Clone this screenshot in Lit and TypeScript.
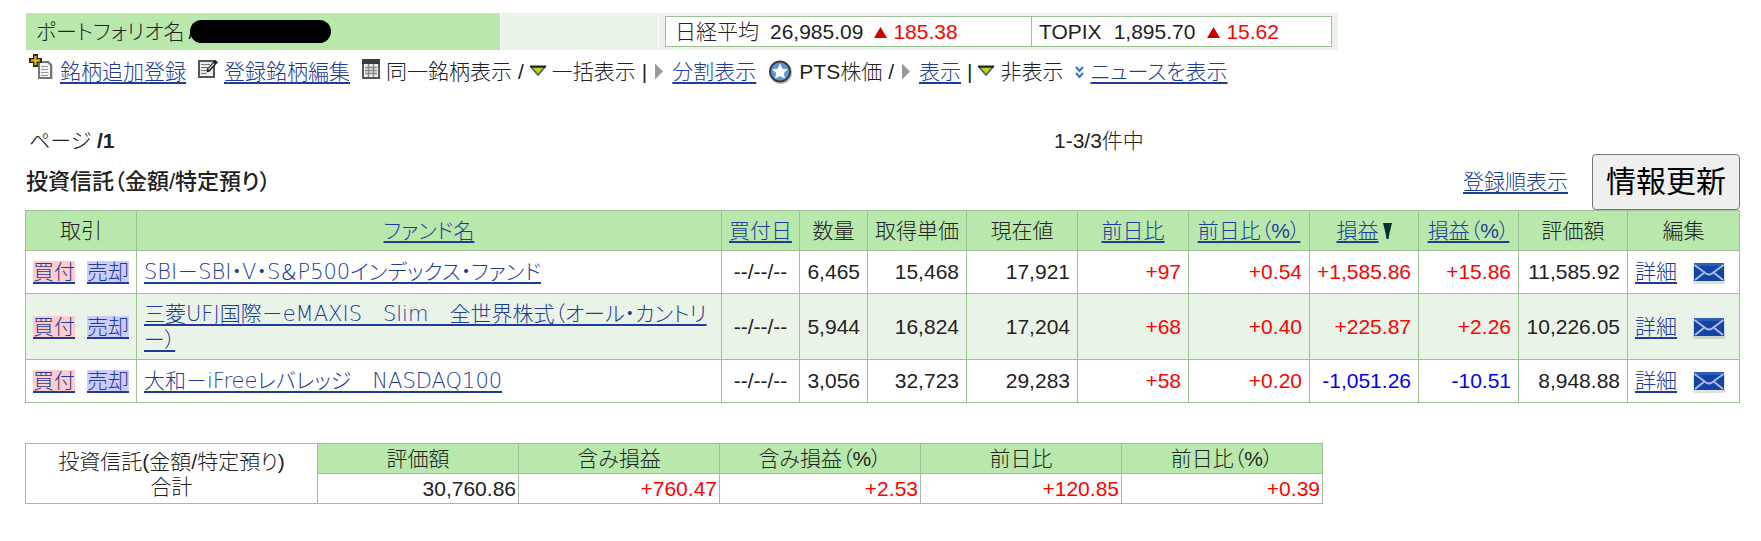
import { LitElement, html, css, svg, nothing } from "lit";
import { customElement } from "lit/decorators.js";

interface Fund {
  lines: string[];
  quantity: string;
  cost: string;
  price: string;
  dayChange: string;
  dayRate: string;
  profit: string;
  profitRate: string;
  value: string;
}

const FUNDS: Fund[] = [
  {
    lines: ["SBI－SBI・V・S＆P500インデックス・ファンド"],
    quantity: "6,465", cost: "15,468", price: "17,921", dayChange: "+97", dayRate: "+0.54",
    profit: "+1,585.86", profitRate: "+15.86", value: "11,585.92",
  },
  {
    lines: ["三菱UFJ国際－eMAXIS　Slim　全世界株式（オール・カントリ", "ー）"],
    quantity: "5,944", cost: "16,824", price: "17,204", dayChange: "+68", dayRate: "+0.40",
    profit: "+225.87", profitRate: "+2.26", value: "10,226.05",
  },
  {
    lines: ["大和－iFreeレバレッジ　NASDAQ100"],
    quantity: "3,056", cost: "32,723", price: "29,283", dayChange: "+58", dayRate: "+0.20",
    profit: "-1,051.26", profitRate: "-10.51", value: "8,948.88",
  },
];

const TOTALS = [
  { label: "評価額", value: "30,760.86" },
  { label: "含み損益", value: "+760.47" },
  { label: "含み損益（%）", value: "+2.53" },
  { label: "前日比", value: "+120.85" },
  { label: "前日比（%）", value: "+0.39" },
];

const tone = (v: string) => (v.startsWith("+") ? "num up" : v.startsWith("-") ? "num down" : "num");

const icon = (w: number, h: number, body: unknown, top = 0) =>
  html`<svg class="icon" width=${w} height=${h} viewBox="0 ${top} ${w} ${h}" aria-hidden="true">${body}</svg>`;

const addIcon = () => icon(25, 26, svg`
  <path d="M11 7.500h9l3.500 3.500V25H11z" fill="#999"/>
  <path d="M10 8h9l3 3v13H10z" fill="#f4f4f4" stroke="#777" stroke-width="2"/>
  <path d="M12 12.500h7M12 15.500h7M12 18.500h7M12 21.500h7" stroke="#999" stroke-width="1"/>
  <path d="M4 0h5v4h4v5H9v4H4V9H0V4h4z" fill="#2e2a1c"/>
  <path d="M5.500 2h2v3.500H11v2H7.500V11h-2V7.500H2v-2h3.500z" fill="#f2c200"/>`, 5);

const editIcon = () => icon(20, 26, svg`
  <path d="M1 7h15v16H1z" fill="#eee" stroke="#555" stroke-width="2"/>
  <path d="M3 10.500h9M3 13.500h7M3 16.500h7M3 19.500h5" stroke="#777"/>
  <path d="M18.500 7l-8.500 9.500" stroke="#222" stroke-width="4"/>
  <path d="M16 9.500l-5.500 6" stroke="#ccc" stroke-width="1.500"/>
  <path d="M8.500 18.500l1-3 2 2z" fill="#111"/>`, 5);

const sheetIcon = () => icon(18, 26, svg`
  <path d="M1 5h16v18H1z" fill="#eee" stroke="#555" stroke-width="2"/>
  <path d="M0 4h18v5H0z" fill="#3c3c3c"/>
  <path d="M3 12.500h12M3 15.500h12M3 18.500h12M6.500 9v13M11.500 9v13" stroke="#888" stroke-width="1.500"/>`, 4);

const openIcon = () => icon(16, 26, svg`
  <path d="M1 10h14l-7 8z" fill="#a9dc1c" stroke="#555" stroke-width="1.500"/>
  <path d="M0 9.500h16" stroke="#222" stroke-width="2"/>`, 2);

const closedIcon = () => icon(13, 26, svg`<path d="M2 4.500v16l8-8z" fill="#999"/>`);

const starIcon = () => icon(25, 26, svg`
  <circle cx="13" cy="15" r="11" fill="#bbb"/>
  <circle cx="12" cy="13.500" r="10" fill="#5f98d3" stroke="#3a3f47" stroke-width="2"/>
  <path d="M12 5.500l2.400 5.200 5.600.6-4.200 3.800 1.200 5.600-5-2.800-5 2.800 1.200-5.600L4 11.300l5.600-.6z" fill="#fff"/>`, 1);

const chevronIcon = () => icon(9, 26, svg`
  <path d="M1 8l3.500 4L8 8M1 14l3.500 4L8 14" fill="none" stroke="#3f6fc4" stroke-width="2"/>`);

const riseIcon = () => icon(13, 26, svg`<path d="M6.500 8L13 19H0z" fill="#c00"/>`);

const sortIcon = () => icon(9, 26, svg`<path d="M0 5h9l-2.500 10-1 6h-2l-1-6z" fill="#033"/>`);

const mailIcon = () => icon(34, 26, svg`
  <rect x="1" y="5" width="32" height="19" rx="2" fill="#000" opacity=".12"/>
  <rect x="2" y="3" width="30" height="18" fill="#1243a5"/>
  <path d="M2 3h30v3H2z" fill="#2c5dbb"/>
  <path d="M2.500 5L14 13.500q3 2 6 0L31.500 5M3 20l10-8M31 20l-10-8" fill="none" stroke="#a9bde6" stroke-width="2"/>`, -1);

@customElement("app-root")
export class AppRoot extends LitElement {
  static styles = css`
    :host {
      display: block;
      padding: 13px 21px 36px 25px;
      background: #fff;
      color: #222;
      font: 300 21px/26px "Liberation Sans", "Noto Sans CJK JP", sans-serif;
      font-feature-settings: "palt";
      white-space: nowrap;
    }
    a {
      color: #1e3c9b;
      text-decoration: underline;
      text-decoration-thickness: 2px;
      text-underline-offset: 3px;
      text-decoration-skip-ink: none;
    }
    .icon { display: block; flex: none; overflow: visible; }
    .banner {
      display: grid;
      grid-template-columns: 474px 157px 679px;
      gap: 1px;
      min-height: 37px;
      margin-left: 1px;
    }
    .owner { display: flex; align-items: center; gap: 4px; padding-left: 10px; background: #b9e8ad; }
    .mask { width: 141px; height: 23px; margin-left: -8px; border-radius: 12px; background: #000; }
    .pale { background: #e9f3e7; }
    .indexes { display: flex; padding: 3px 6px; background: #e9f3e7; }
    .index {
      display: flex;
      flex: 1;
      align-items: center;
      gap: 12px;
      padding-left: 7px;
      border: 1px solid #9fbf97;
      background: #fff;
    }
    .index + .index { flex: 0 0 292px; border-left: 0; }
    .index.wide { gap: 11px; padding-left: 9px; }
    .move { display: flex; gap: 6px; color: #f00; }
    .tools { display: flex; flex-wrap: wrap; align-items: center; column-gap: 12px; min-height: 44px; padding-left: 4px; }
    .tool { display: flex; gap: 6px; }
    .pager { display: grid; grid-template-columns: 3fr 2fr; margin-top: 34px; }
    .page { padding-left: 4px; }
    .heading { display: flex; align-items: center; gap: 24px; min-height: 56px; }
    h2 { flex: 1; margin: 0; padding-left: 1px; font-size: 22px; font-weight: 500; }
    b { font-weight: 700; }
    button {
      padding: 3px 13px 9px;
      border: 1px solid #767676;
      border-radius: 4px;
      background: #efefef;
      color: #000;
      font: 400 30px/42px "Noto Sans CJK JP", sans-serif;
    }
    table { border-collapse: collapse; }
    th, td { box-sizing: border-box; padding: 0 7px; border: 1px solid #9fbf97; font-weight: 300; }
    th { background: #b9e8ad; text-align: center; }
    .holdings { width: 100%; table-layout: fixed; }
    .holdings th { height: 40px; padding: 0; }
    .holdings td { height: 43px; }
    .holdings tr:nth-child(even) td { height: 66px; background: #e9f3e7; }
    .fund { font-family: "DejaVu Sans Light", "DejaVu Sans", "Noto Sans CJK JP", sans-serif; font-weight: 200; }
    .w-trade { width: 111px; }
    .w-date { width: 78px; }
    .w-qty { width: 68px; }
    .w-cost { width: 99px; }
    .w-price { width: 111px; }
    .w-rate { width: 121px; }
    .w-gain { width: 109px; }
    .w-gain-rate { width: 100px; }
    .w-edit { width: 112px; }
    .num { text-align: right; }
    .up { color: #f00; }
    .down { color: #00f; }
    .date { text-align: center; }
    .trade, .edit, .sort { display: flex; align-items: center; }
    .trade { gap: 12px; }
    .edit { gap: 15px; }
    .sort { justify-content: center; gap: 4px; }
    .trade a { line-height: 22px; }
    .buy { background: #fcc; }
    .sell { background: #ccf; }
    .totals { margin-top: 40px; }
    .totals th, .totals td { width: 201px; height: 30px; padding: 0 2px; }
    .totals .total-name { width: 292px; background: #fff; line-height: 25px; }
  `;

  render() {
    return html`
      <header class="banner">
        <div class="owner"><span>ポートフォリオ名</span><span>/</span><span class="mask"></span></div>
        <div class="pale"></div>
        <div class="indexes">
          ${this.index("日経平均", "26,985.09", "185.38", true)}
          ${this.index("TOPIX", "1,895.70", "15.62", false)}
        </div>
      </header>
      <nav class="tools">
        <span class="tool">${addIcon()}<a href="#">銘柄追加登録</a></span>
        <span class="tool">${editIcon()}<a href="#">登録銘柄編集</a></span>
        <span class="tool">${sheetIcon()}<span>同一銘柄表示</span><span>/</span>${openIcon()}<span>一括表示</span><span>|</span>${closedIcon()}<a href="#">分割表示</a></span>
        <span class="tool">${starIcon()}<span>PTS株価</span><span>/</span>${closedIcon()}<a href="#">表示</a><span>|</span>${openIcon()}<span>非表示</span></span>
        <span class="tool">${chevronIcon()}<a href="#">ニュースを表示</a></span>
      </nav>
      <div class="pager"><span class="page">ページ <b>/1</b></span><span>1-3/3件中</span></div>
      <div class="heading">
        <h2>投資信託（金額/特定預り）</h2>
        <a href="#">登録順表示</a>
        <button type="button">情報更新</button>
      </div>
      <table class="holdings">
        <thead>
          <tr>
            <th class="w-trade">取引</th>
            <th><a href="#">ファンド名</a></th>
            <th class="w-date"><a href="#">買付日</a></th>
            <th class="w-qty">数量</th>
            <th class="w-cost">取得単価</th>
            <th class="w-price">現在値</th>
            <th class="w-price"><a href="#">前日比</a></th>
            <th class="w-rate"><a href="#">前日比（%）</a></th>
            <th class="w-gain"><div class="sort"><a href="#">損益</a>${sortIcon()}</div></th>
            <th class="w-gain-rate"><a href="#">損益（%）</a></th>
            <th class="w-gain">評価額</th>
            <th class="w-edit">編集</th>
          </tr>
        </thead>
        <tbody>${FUNDS.map((f) => this.fund(f))}</tbody>
      </table>
      <table class="totals">
        <tr>
          <th class="total-name" rowspan="2">投資信託(金額/特定預り)<br />合計</th>
          ${TOTALS.map((t) => html`<th>${t.label}</th>`)}
        </tr>
        <tr>${TOTALS.map((t) => html`<td class=${tone(t.value)}>${t.value}</td>`)}</tr>
      </table>
    `;
  }

  private index(name: string, value: string, change: string, wide: boolean) {
    return html`<div class="index ${wide ? "wide" : ""}">
      <span>${name}</span><span>${value}</span>
      <span class="move">${riseIcon()}<span>${change}</span></span>
    </div>`;
  }

  private fund(f: Fund) {
    return html`<tr>
      <td><div class="trade"><a class="buy" href="#">買付</a><a class="sell" href="#">売却</a></div></td>
      <td><a class="fund" href="#">${f.lines.map((l, i) => html`${i ? html`<br />` : nothing}${l}`)}</a></td>
      <td class="date">--/--/--</td>
      <td class="num">${f.quantity}</td>
      <td class="num">${f.cost}</td>
      <td class="num">${f.price}</td>
      <td class=${tone(f.dayChange)}>${f.dayChange}</td>
      <td class=${tone(f.dayRate)}>${f.dayRate}</td>
      <td class=${tone(f.profit)}>${f.profit}</td>
      <td class=${tone(f.profitRate)}>${f.profitRate}</td>
      <td class="num">${f.value}</td>
      <td><div class="edit"><a href="#">詳細</a><a href="#" aria-label="メール">${mailIcon()}</a></div></td>
    </tr>`;
  }
}
